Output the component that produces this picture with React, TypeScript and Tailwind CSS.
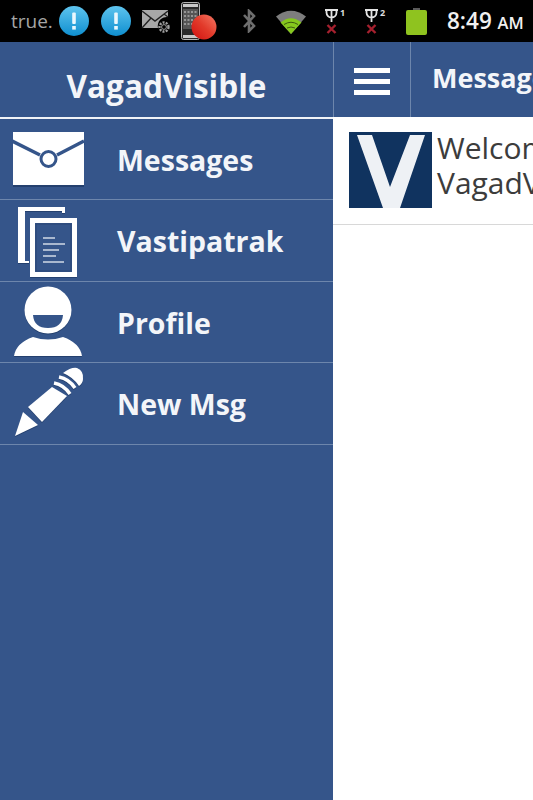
import type { ReactNode } from "react";

const font = { fontFamily: '"Open Sans", "Noto Sans", sans-serif' };

function Alert() {
  return (
    <svg width="32" height="30" viewBox="0 0 32 30">
      <defs>
        <linearGradient id="alertBlue" x1="0" y1="0" x2="0" y2="1">
          <stop offset="0" stopColor="#5ec4ee" />
          <stop offset="1" stopColor="#0f8fd0" />
        </linearGradient>
      </defs>
      <circle cx="16" cy="15" r="15" fill="url(#alertBlue)" />
      <rect x="14.2" y="6.5" width="3.6" height="11.5" rx="1" fill="#eaf7fd" />
      <rect x="14.2" y="20" width="3.6" height="3.6" fill="#eaf7fd" />
    </svg>
  );
}

function MailSettings() {
  return (
    <svg width="30" height="26" viewBox="0 0 30 26">
      <path d="M1 2h26v7a9 9 0 0 0-10 11H1z" fill="#a8a8a8" />
      <path d="M1 3l13 10L27 3M1 20l9-10M27 9l-4-3" stroke="#222" strokeWidth="1.4" fill="none" />
      <circle cx="23" cy="19" r="4.5" fill="none" stroke="#a0a0a0" strokeWidth="2.4" strokeDasharray="2 1.2" />
      <circle cx="23" cy="19" r="2.4" fill="none" stroke="#a0a0a0" strokeWidth="1" />
    </svg>
  );
}

function PhoneBadge() {
  return (
    <svg width="36" height="38" viewBox="0 0 36 38">
      <rect x="0.5" y="0.5" width="18" height="37" rx="2" fill="#2a2a2a" stroke="#b5b5b5" />
      <rect x="2" y="2" width="15" height="3" fill="#c8c8c8" />
      <rect x="2" y="7" width="15" height="20" fill="#555" />
      <path d="M3 10h13M3 14h13M3 18h13M3 22h13" stroke="#aaa" strokeWidth="1.6" strokeDasharray="2 1.5" />
      <rect x="2" y="33" width="15" height="3" fill="#c8c8c8" />
      <defs>
        <linearGradient id="redBadge" x1="1" y1="0" x2="0" y2="1">
          <stop offset="0" stopColor="#f47a66" />
          <stop offset="0.5" stopColor="#e23a2a" />
          <stop offset="1" stopColor="#d01010" />
        </linearGradient>
      </defs>
      <circle cx="23" cy="25" r="12.500" fill="url(#redBadge)" />
    </svg>
  );
}

function Bluetooth() {
  return (
    <svg width="14" height="24" viewBox="0 0 14 24">
      <path d="M2 6l10 11-5 5V2l5 5L2 18" fill="none" stroke="#6e6e6e" strokeWidth="2.6" />
    </svg>
  );
}

function Wifi() {
  return (
    <svg width="32" height="26" viewBox="0 0 32 26">
      <path d="M1 8.500Q16-3 31 8.500L16 26z" fill="#7d7d7d" />
      <path d="M5.500 14.500Q16 6 26.500 14.500L16 26z" fill="#86c81e" />
      <path d="M9 16.500Q16 12 23 16.500" stroke="#3d5a10" strokeWidth="1" fill="none" />
      <path d="M12 20Q16 18 20 20" stroke="#3d5a10" strokeWidth="1" fill="none" />
    </svg>
  );
}

function Signal({ label }: { label: string }) {
  return (
    <div className="relative w-[20px] h-[26px]">
      <svg width="20" height="26" viewBox="0 0 20 26" className="absolute left-0 top-0">
        <path d="M0 2h13M1.500 2v2.500a5 5 0 0 0 10 0V2M6.500 2v12" stroke="#e4e4e4" strokeWidth="1.800" fill="none" />
        <path d="M2.500 17l8 8M10.500 17l-8 8" stroke="#a5202e" strokeWidth="2.400" />
      </svg>
      <span className="absolute left-[15px] top-[-1px] text-[9px] leading-[12px] font-bold text-[#dddddd]">{label}</span>
    </div>
  );
}

function Battery() {
  return (
    <svg width="21" height="27" viewBox="0 0 21 27">
      <rect x="7" y="0" width="7" height="2" fill="#5a5a5a" />
      <rect x="0" y="2" width="21" height="25" rx="2" fill="#8fc31f" />
    </svg>
  );
}

function Envelope() {
  return (
    <svg width="72" height="55" viewBox="0 0 72 55" className="drop-shadow-[0_2px_0_#24406e]">
      <rect x="0" y="0" width="71" height="53" fill="#ffffff" />
      <path d="M-1 9L27 23M71 9L44 23" stroke="#35558a" strokeWidth="3.500" fill="none" />
      <circle cx="35.500" cy="27" r="7.500" fill="#ffffff" stroke="#35558a" strokeWidth="3" />
    </svg>
  );
}

function Docs() {
  return (
    <svg width="66" height="72" viewBox="0 0 66 72" className="drop-shadow-[0_1px_0_#24406e]">
      <path d="M5 2h47v6h-3V6H12v50h4v2H5z" fill="#ffffff" />
      <rect x="19.500" y="15.500" width="42" height="54" fill="#35558a" stroke="#ffffff" strokeWidth="5" />
      <rect x="23" y="19" width="35" height="47" fill="none" stroke="#2a4674" strokeWidth="1" />
      <path d="M30 33h12M30 39h22M30 45h16M30 51h13M30 57h21" stroke="#a9b8cf" strokeWidth="2" />
    </svg>
  );
}

function Person() {
  return (
    <svg width="70" height="72" viewBox="0 0 70 72" className="drop-shadow-[0_1px_0_#24406e]">
      <circle cx="35" cy="24" r="23.500" fill="#ffffff" />
      <path d="M20 29h30q-1 13-15 13T20 29z" fill="#35558a" />
      <path d="M1 70Q3 57 20 51q15 5 30 0 17 6 19 19z" fill="#ffffff" />
    </svg>
  );
}

function Pencil() {
  return (
    <svg width="72" height="72" viewBox="0 0 72 72" className="drop-shadow-[0_1px_0_#24406e]">
      <path d="M2 69l8-24 15 13z" fill="#ffffff" />
      <path d="M15 40L39 20l15 9-25 26z" fill="#ffffff" />
      <path d="M41 16Q51 18 57 27" stroke="#ffffff" strokeWidth="3.500" fill="none" />
      <path d="M46 10Q56 12 62 21" stroke="#ffffff" strokeWidth="3.500" fill="none" />
      <path d="M50 6Q58 0 64 1Q71 4 70 12Q70 16 66 19Q60 10 50 6z" fill="#ffffff" />
    </svg>
  );
}

function MenuRow({ icon, label }: { icon: ReactNode; label: string }) {
  return (
    <div className="h-[81.4px] flex items-center border-b border-[#6d86ac]">
      <div className="w-[117px] shrink-0 pl-[13px]">{icon}</div>
      <span className="text-[28.5px] font-bold text-[#f3f5f9] mt-[2px]">{label}</span>
    </div>
  );
}

export default function App() {
  return (
    <div className="w-[533px] h-[800px] overflow-hidden flex flex-col bg-white" style={font}>
      <div className="h-[42px] shrink-0 bg-black flex items-center">
        <span className="ml-[11px] w-[47px] text-[19px] text-[#a5a5a5]">true.</span>
        <Alert />
        <div className="ml-[10px]"><Alert /></div>
        <div className="ml-[9px]"><MailSettings /></div>
        <div className="ml-[10px]"><PhoneBadge /></div>
        <div className="ml-[25px]"><Bluetooth /></div>
        <div className="ml-[19px]"><Wifi /></div>
        <div className="ml-[18px]"><Signal label="1" /></div>
        <div className="ml-[20px]"><Signal label="2" /></div>
        <div className="ml-[21px]"><Battery /></div>
        <span className="ml-[20px] text-[22.5px] font-semibold text-[#f0f0f0] whitespace-nowrap">
          8:49 <span className="text-[16.5px]">AM</span>
        </span>
      </div>
      <div className="flex-1 flex min-h-0">
        <div className="w-[333px] shrink-0 bg-[#35558a]">
          <div className="h-[77px] pt-[13px] flex items-center justify-center border-b-2 border-[#f0f3f7]">
            <span className="text-[31.500px] font-bold text-[#f3f5f9]">VagadVisible</span>
          </div>
          <MenuRow icon={<Envelope />} label="Messages" />
          <MenuRow icon={<Docs />} label="Vastipatrak" />
          <MenuRow icon={<Person />} label="Profile" />
          <MenuRow icon={<Pencil />} label="New Msg" />
        </div>
        <div className="flex-1 min-w-0 overflow-hidden">
          <div className="h-[75px] bg-[#35558a] flex items-center border-l border-[#6d86ac]">
            <div className="w-[77px] h-full shrink-0 pt-[3px] flex flex-col items-center justify-center gap-[6px] border-r border-[#6d86ac]">
              <div className="w-[36px] h-[5px] bg-white" />
              <div className="w-[36px] h-[5px] bg-white" />
              <div className="w-[36px] h-[5px] bg-white" />
            </div>
            <span className="ml-[21px] mt-[-3px] text-[27px] font-bold text-[#f3f5f9] whitespace-nowrap">Messages</span>
          </div>
          <div className="h-[108px] flex items-start border-b border-[#d8d8d8] pl-[16px] pt-[15px]">
            <svg width="83" height="76" viewBox="0 0 83 76" className="shrink-0">
              <rect width="83" height="76" fill="#10335f" />
              <path d="M8 3h15l18 52L61 3h15L51 76H34z" fill="#eef1f5" />
            </svg>
            <div className="ml-[5px] mt-[-2px] text-[30px] leading-[35px] text-[#3c3c3c] whitespace-nowrap">
              Welcome to
              <br />
              VagadVisible
            </div>
          </div>
        </div>
      </div>
    </div>
  );
}
